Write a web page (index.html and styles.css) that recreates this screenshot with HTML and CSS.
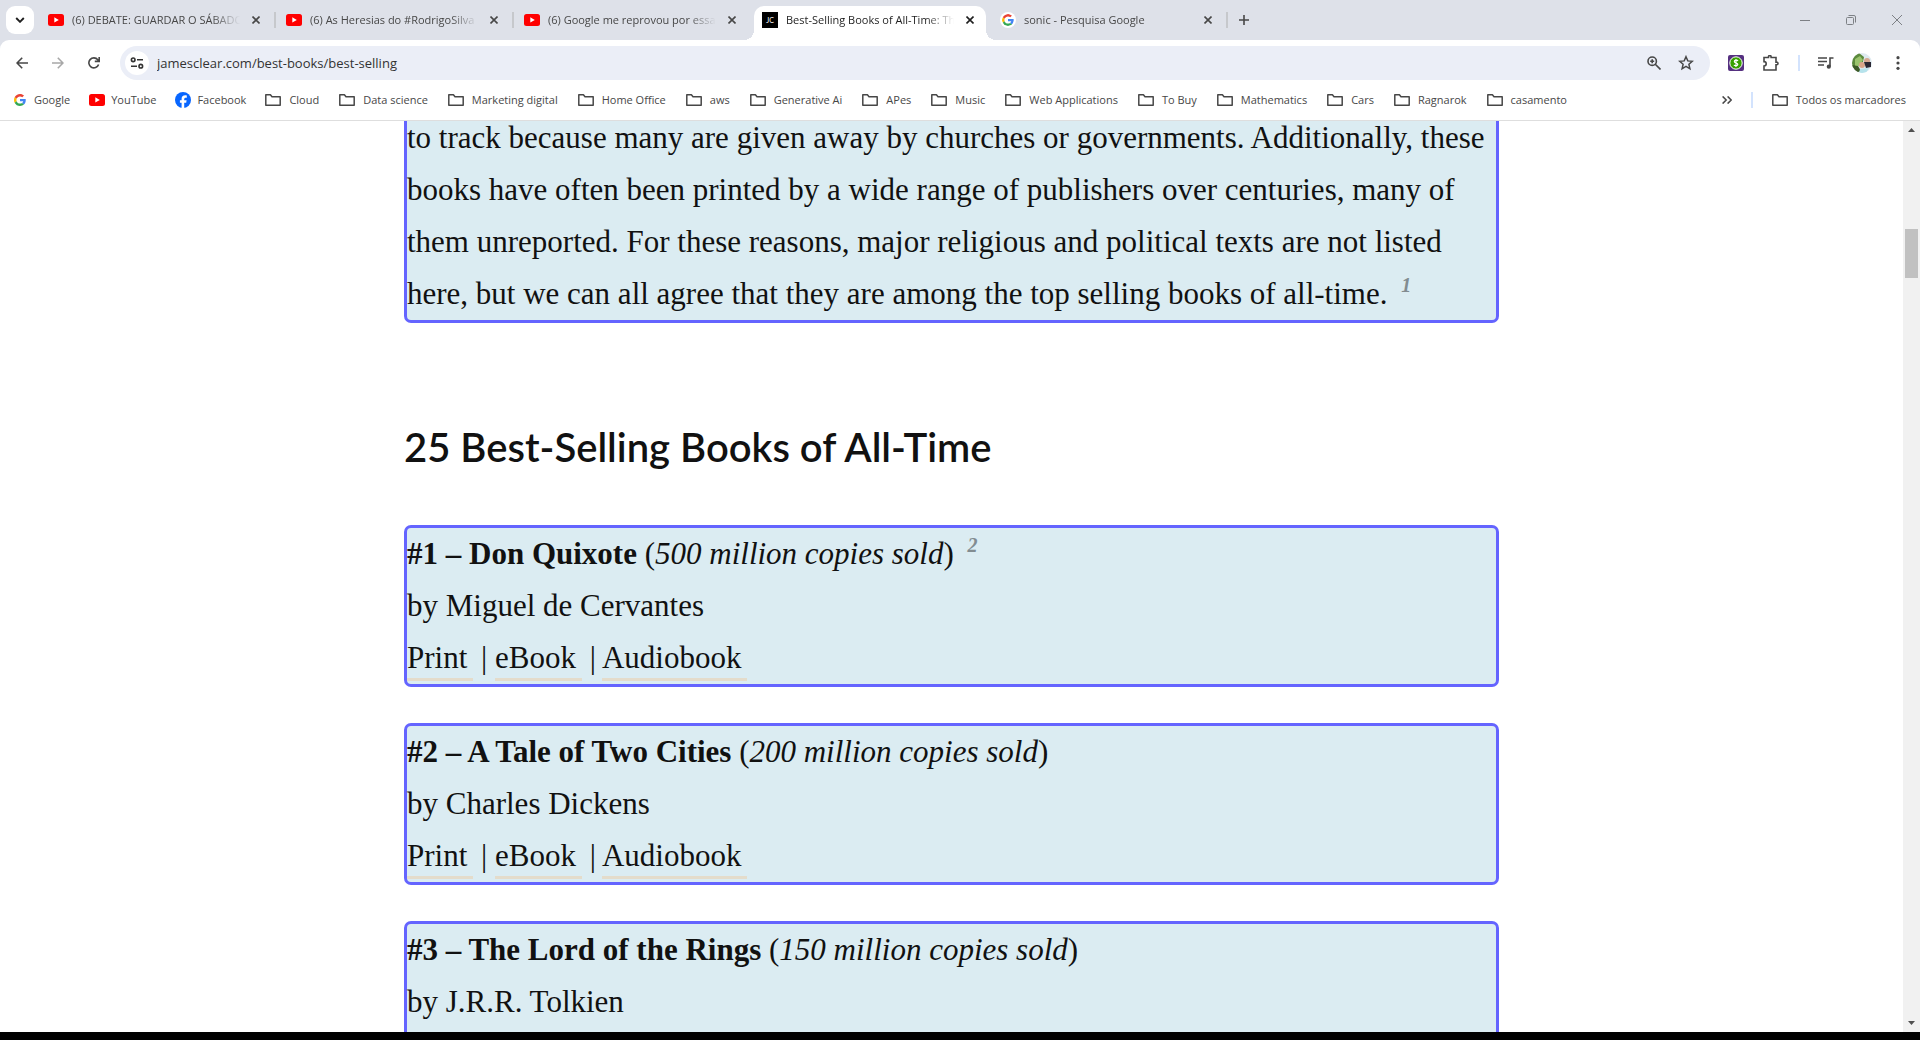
FILE: index.html
```html
<!DOCTYPE html>
<html lang="pt-BR">
<head>
<meta charset="utf-8">
<title>Best-Selling Books of All-Time</title>
<link rel="stylesheet" href="styles.css">
</head>
<body>
<svg class="defs" aria-hidden="true">
  <symbol id="yt" viewBox="0 0 16 16"><rect y="2" width="16" height="12" rx="2.5" fill="#f00"/><path d="M6.3 5.3v5.2L10.8 8z" fill="#fff"/></symbol>
  <symbol id="google" viewBox="0 0 48 48"><path fill="#ea4335" d="M24 9.5c3.54 0 6.71 1.22 9.21 3.6l6.85-6.85C35.9 2.38 30.47 0 24 0 14.62 0 6.51 5.38 2.56 13.22l7.98 6.19C12.43 13.72 17.74 9.5 24 9.5z"/><path fill="#4285f4" d="M46.98 24.55c0-1.57-.15-3.09-.38-4.55H24v9.02h12.94c-.58 2.96-2.26 5.48-4.78 7.18l7.73 6c4.51-4.18 7.09-10.36 7.09-17.65z"/><path fill="#fbbc05" d="M10.53 28.59c-.48-1.45-.76-2.99-.76-4.59s.27-3.14.76-4.59l-7.98-6.19C.92 16.46 0 20.12 0 24c0 3.88.92 7.54 2.56 10.78l7.97-6.19z"/><path fill="#34a853" d="M24 48c6.48 0 11.93-2.13 15.89-5.81l-7.73-6c-2.15 1.45-4.92 2.3-8.16 2.3-6.26 0-11.57-4.22-13.47-9.91l-7.98 6.19C6.51 42.62 14.62 48 24 48z"/></symbol>
  <symbol id="fb" viewBox="0 0 16 16"><circle cx="8" cy="8" r="8" fill="#0866ff"/><path fill="#fff" d="M6.6 15.9v-5.2H4.9V8.2h1.7V7.1c0-2.6 1.2-3.8 3.7-3.8.5 0 1.2.1 1.5.2v2.2h-1c-1.2 0-1.6.5-1.6 1.6v.9h2.4l-.4 2.5h-2v5.3z"/></symbol>
  <symbol id="folder" viewBox="0 0 16 16"><path d="M.8 13.200V2.8h4.600l1.600 2h8.200v8.400H.8z" fill="none" stroke="#474747" stroke-width="1.5" stroke-linejoin="round"/></symbol>
  <symbol id="x" viewBox="0 0 8 8"><path d="M.5.5l7 7m0-7l-7 7" fill="none" stroke="currentColor" stroke-width="1.6"/></symbol>
</svg>

<header class="browser">
  <div class="tabstrip">
    <button class="tabsearch" aria-label="Pesquisar guias"><svg width="10" height="6" viewBox="0 0 10 6"><path d="M1.2 1L5 4.8 8.8 1" fill="none" stroke="#1f1f1f" stroke-width="1.9"/></svg></button>
    <div class="tabs">
      <div class="tab"><svg class="fav"><use href="#yt"/></svg><span class="title">(6) DEBATE: GUARDAR O SÁBADO</span><button class="close" aria-label="Fechar"><svg><use href="#x"/></svg></button></div>
      <div class="tab"><svg class="fav"><use href="#yt"/></svg><span class="title">(6) As Heresias do #RodrigoSilva</span><button class="close" aria-label="Fechar"><svg><use href="#x"/></svg></button></div>
      <div class="tab plain"><svg class="fav"><use href="#yt"/></svg><span class="title">(6) Google me reprovou por essa</span><button class="close" aria-label="Fechar"><svg><use href="#x"/></svg></button></div>
      <div class="tab plain active"><span class="fav jc">JC</span><span class="title">Best-Selling Books of All-Time: The</span><button class="close" aria-label="Fechar"><svg><use href="#x"/></svg></button></div>
      <div class="tab"><svg class="fav round"><use href="#google"/></svg><span class="title">sonic - Pesquisa Google</span><button class="close" aria-label="Fechar"><svg><use href="#x"/></svg></button></div>
    </div>
    <button class="newtab" aria-label="Nova guia"><svg width="10" height="10" viewBox="0 0 10 10"><path d="M5 0v10M0 5h10" stroke="#474747" stroke-width="1.6"/></svg></button>
    <div class="window">
      <button aria-label="Minimizar"><svg width="10" height="10" viewBox="0 0 10 10"><path d="M0 5.5h10"/></svg></button>
      <button aria-label="Restaurar"><svg width="10" height="10" viewBox="0 0 10 10"><rect x=".5" y="2.5" width="7" height="7" rx="1"/><path d="M2.5.5h5.500a1.500 1.500 0 0 1 1.500 1.500v5.500"/></svg></button>
      <button aria-label="Fechar janela"><svg width="10" height="10" viewBox="0 0 10 10"><path d="M0 0l10 10M10 0L0 10"/></svg></button>
    </div>
  </div>

  <div class="toolbar">
    <button class="nav" aria-label="Voltar"><svg width="12" height="12" viewBox="0 0 12 12"><path d="M12 6H1.200M6.200.7L1 6l5.200 5.300" fill="none" stroke="#474747" stroke-width="1.6"/></svg></button>
    <button class="nav" aria-label="Avançar"><svg width="12" height="12" viewBox="0 0 12 12"><path d="M0 6h10.800M5.800.7L11 6l-5.200 5.300" fill="none" stroke="#a8a8a8" stroke-width="1.6"/></svg></button>
    <button class="nav" aria-label="Recarregar"><svg width="12" height="12" viewBox="0 0 12 12"><path d="M10.600 7.500A5 5 0 1 1 9.800 2.800L11 4M11.200 0v4.400H6.800" fill="none" stroke="#474747" stroke-width="1.6"/></svg></button>
    <div class="omnibox">
      <button class="site" aria-label="Informações do site"><svg width="14" height="12" viewBox="0 0 14 12" fill="none" stroke="#333" stroke-width="1.600"><circle cx="3.200" cy="2.800" r="1.800"/><path d="M7 2.800h6M1 9.200h6"/><circle cx="10.800" cy="9.200" r="1.800"/></svg></button>
      <input class="url" type="text" aria-label="Endereço" value="jamesclear.com/best-books/best-selling">
      <button class="ic" aria-label="Zoom"><svg width="14" height="14" viewBox="0 0 14 14" fill="none" stroke="#474747" stroke-width="1.6"><circle cx="5.200" cy="5.200" r="4.200"/><path d="M8.300 8.300l5.200 5.200M5.200 3.200v4M3.200 5.200h4"/></svg></button>
      <button class="ic" aria-label="Favoritar"><svg width="16" height="16" viewBox="0 0 16 16"><path d="M8 1.700l1.800 4.200 4.500.4-3.400 3 1 4.500L8 11.400l-3.900 2.400 1-4.500-3.400-3 4.500-.4z" fill="none" stroke="#474747" stroke-width="1.500"/></svg></button>
    </div>
    <div class="actions">
      <button aria-label="Extensão"><svg width="16" height="16" viewBox="0 0 16 16"><rect width="16" height="16" rx="2" fill="#553080"/><circle cx="8" cy="8" r="6.200" fill="#37a000" stroke="#fff"/><path d="M9.900 6C9.600 5 6.300 4.700 6.300 6.500c0 1.800 3.500 1.100 3.500 2.900C9.800 11.100 6.400 11 6 9.900M8 4v8" fill="none" stroke="#fff" stroke-width="1.200"/></svg></button>
      <button aria-label="Extensões"><svg width="18" height="16" viewBox="0 0 18 16"><path d="M2 2.500h4.500V1.800a1.300 1.300 0 0 1 2.600 0v.7H14v4.600h.7a1.300 1.300 0 0 1 0 2.600H14V15H2v-4a2.200 2.200 0 0 0 0-4.400z" fill="none" stroke="#474747" stroke-width="1.600"/></svg></button>
      <span class="rule"></span>
      <button aria-label="Controle de mídia"><svg width="16" height="12" viewBox="0 0 16 12"><path d="M0 1h9M0 4.500h9M0 8h6M12 9.500V1h3.500" fill="none" stroke="#474747" stroke-width="1.600"/><circle cx="10.800" cy="9.700" r="2.100" fill="#474747"/></svg></button>
      <button aria-label="Perfil"><svg width="20" height="20" viewBox="0 0 20 20"><defs><clipPath id="av"><circle cx="10" cy="10" r="10"/></clipPath></defs><g clip-path="url(#av)"><path fill="#dfeaf0" d="M0 0h20v20H0z"/><path fill="#5c8a3c" d="M0 3l7-3 5 4-1 5-11 6z"/><path fill="#9bc46d" d="M3 6l5-3 3 4-4 6-4 1z"/><path fill="#3c5a26" d="M0 12l6 1 3 5-6 2z"/><circle cx="10" cy="12" r="3" fill="#d8a488"/><circle cx="15" cy="8" r="3" fill="#d6a890"/><path fill="#2a2733" d="M12 9l7 0v5l-5 1z"/><path fill="#b6e3ec" d="M8 16l9-1-3 5H7z"/></g></svg></button>
      <button class="menu" aria-label="Menu"><svg width="4" height="14" viewBox="0 0 4 14" fill="#474747"><circle cx="2" cy="1.700" r="1.600"/><circle cx="2" cy="7" r="1.600"/><circle cx="2" cy="12.300" r="1.600"/></svg></button>
    </div>
  </div>

  <nav class="bookmarks">
    <a href="#"><svg class="g"><use href="#google"/></svg>Google</a>
    <a href="#"><svg><use href="#yt"/></svg>YouTube</a>
    <a href="#"><svg><use href="#fb"/></svg>Facebook</a>
    <a class="folder" href="#"><svg><use href="#folder"/></svg>Cloud</a>
    <a class="folder" href="#"><svg><use href="#folder"/></svg>Data science</a>
    <a class="folder" href="#"><svg><use href="#folder"/></svg>Marketing digital</a>
    <a class="folder" href="#"><svg><use href="#folder"/></svg>Home Office</a>
    <a class="folder" href="#"><svg><use href="#folder"/></svg>aws</a>
    <a class="folder" href="#"><svg><use href="#folder"/></svg>Generative Ai</a>
    <a class="folder" href="#"><svg><use href="#folder"/></svg>APes</a>
    <a class="folder" href="#"><svg><use href="#folder"/></svg>Music</a>
    <a class="folder" href="#"><svg><use href="#folder"/></svg>Web Applications</a>
    <a class="folder" href="#"><svg><use href="#folder"/></svg>To Buy</a>
    <a class="folder" href="#"><svg><use href="#folder"/></svg>Mathematics</a>
    <a class="folder" href="#"><svg><use href="#folder"/></svg>Cars</a>
    <a class="folder" href="#"><svg><use href="#folder"/></svg>Ragnarok</a>
    <a class="folder" href="#"><svg><use href="#folder"/></svg>casamento</a>
    <button class="more" aria-label="Mais favoritos"><svg width="10" height="8" viewBox="0 0 10 8"><path d="M.6.4L4.200 4 .6 7.600M5.600.4L9.200 4 5.600 7.600" fill="none" stroke="#474747" stroke-width="1.500"/></svg></button>
    <span class="rule"></span>
    <a class="folder" href="#"><svg><use href="#folder"/></svg>Todos os marcadores</a>
  </nav>
</header>

<div class="viewport">
  <main class="page">
    <article class="article">
      <p class="block">to track because many are given away by churches or governments. Additionally, these<br>books have often been printed by a wide range of publishers over centuries, many of<br>them unreported. For these reasons, major religious and political texts are not listed<br>here, but we can all agree that they are among the top selling books of all-time. <a class="note" href="#n1">1</a></p>
      <h2>25 Best-Selling Books of All-Time</h2>
      <p class="block"><strong>#1 – Don Quixote</strong> (<em>500 million copies sold</em>) <a class="note" href="#n2">2</a><br>by Miguel de Cervantes<br><a class="buy" href="#">Print</a> | <a class="buy" href="#">eBook</a> | <a class="buy" href="#">Audiobook</a></p>
      <p class="block"><strong>#2 – A Tale of Two Cities</strong> (<em>200 million copies sold</em>)<br>by Charles Dickens<br><a class="buy" href="#">Print</a> | <a class="buy" href="#">eBook</a> | <a class="buy" href="#">Audiobook</a></p>
      <p class="block"><strong>#3 – The Lord of the Rings</strong> (<em>150 million copies sold</em>)<br>by J.R.R. Tolkien<br><a class="buy" href="#">Print</a> | <a class="buy" href="#">eBook</a> | <a class="buy" href="#">Audiobook</a></p>
    </article>
  </main>
  <div class="scrollbar" aria-hidden="true">
    <svg width="7" height="4" viewBox="0 0 7 4"><path d="M0 4L3.500 0 7 4z"/></svg>
    <span class="before"></span><span class="thumb"></span><span class="after"></span>
    <svg width="7" height="4" viewBox="0 0 7 4"><path d="M0 0h7L3.500 4z"/></svg>
  </div>
</div>
</body>
</html>
```
FILE: styles.css
```css
* { box-sizing: border-box; }

body {
  margin: 0;
  height: 100vh;
  display: flex;
  flex-direction: column;
  padding-bottom: 8px;
  overflow: hidden;
  background: #000;
  font: 12px/16px "Open Sans", sans-serif;
  color: #474747;
}

.defs { position: absolute; width: 0; height: 0; }

button {
  border: 0;
  padding: 0;
  background: none;
  color: inherit;
  display: flex;
  align-items: center;
  justify-content: center;
}

a { color: inherit; text-decoration: none; }

/* Browser frame */
.browser { background: #dee1e9; border-bottom: 1px solid #dedede; }

.tabstrip { display: flex; height: 40px; padding-left: 6px; }

.tabsearch {
  width: 28px;
  height: 28px;
  margin-top: 6px;
  border-radius: 9px;
  background: #fff;
}

.tabs { display: flex; gap: 6px; margin-left: 6px; padding-top: 6px; }

.tab {
  position: relative;
  display: flex;
  align-items: center;
  width: 232px;
  height: 34px;
  padding: 0 8px 6px;
  border-radius: 10px 10px 0 0;
}

.tab::after {
  content: "";
  position: absolute;
  right: -4px;
  top: 6px;
  width: 2px;
  height: 16px;
  background: #c6c8cc;
}

.plain::after { display: none; }

.active { background: #fff; color: #1f1f1f; }

/* flared feet of the selected tab */
.active::before {
  content: "";
  position: absolute;
  left: -10px;
  right: -10px;
  bottom: 0;
  height: 10px;
  background:
    radial-gradient(circle at 0 0, transparent 10px, #fff 10px) 0 0 / 10px 10px no-repeat,
    radial-gradient(circle at 100% 0, transparent 10px, #fff 10px) 100% 0 / 10px 10px no-repeat;
}

.fav { width: 16px; height: 16px; flex: none; }
.round { border-radius: 8px; background: #fff; padding: 2px; }
.jc { background: #000; color: #fff; font: 400 7px/16px Lato, sans-serif; text-align: center; }

.title {
  flex: 1;
  margin: 0 8px;
  overflow: hidden;
  white-space: nowrap;
  font-size: 11px;
  mask-image: linear-gradient(to right, #000 calc(100% - 28px), transparent);
}

.close { width: 16px; height: 16px; }
.close svg { width: 8px; height: 8px; }

.newtab { width: 28px; height: 28px; margin: 6px 0 0 6px; }

.window { display: flex; margin-left: auto; }
.window button { width: 46px; height: 40px; }
.window svg { fill: none; stroke: #7d8085; }

.toolbar {
  display: flex;
  align-items: center;
  height: 46px;
  padding: 0 20px 0 4px;
  background: #fff;
  border-radius: 9px 9px 0 0;
}

.nav { width: 36px; height: 34px; }

.omnibox {
  flex: 1;
  display: flex;
  align-items: center;
  height: 34px;
  margin-left: 8px;
  padding: 0 8px 0 5px;
  border-radius: 17px;
  background: #ebeef7;
}

.site { width: 24px; height: 24px; border-radius: 12px; background: #fff; }

.url {
  flex: 1;
  border: 0;
  padding: 0 8px;
  outline: 0;
  background: none;
  font: 13px/20px "Open Sans", sans-serif;
  color: #333;
}

.ic { width: 32px; height: 32px; }

.actions { display: flex; align-items: center; gap: 18px; margin-left: 18px; }
.menu { margin-left: 6px; }

.rule { width: 2px; height: 16px; background: #d3e3fd; }

.bookmarks {
  display: flex;
  align-items: center;
  gap: 19px;
  height: 34px;
  padding: 0 13px 6px 12px;
  background: #fff;
  font-size: 11px;
  white-space: nowrap;
}

.bookmarks a { display: flex; align-items: center; gap: 6px; }
.bookmarks .folder { gap: 8px; padding-right: 1px; }
.bookmarks a svg { width: 16px; height: 16px; }
.bookmarks a .g { padding: 2px; }
.more { margin-left: auto; }

/* Web page */
.viewport { flex: 1; min-height: 0; display: flex; background: #fff; }

.page { flex: 1; overflow: hidden; padding: 0 24px; }

.article {
  max-width: 1095px;
  margin: -12px auto 0;
  font: 31px/52px "Liberation Serif", serif;
  color: #111;
}

.block {
  margin: 0 0 36px;
  border: 3px solid #6464ff;
  border-radius: 7px;
  background: #dbecf2;
  white-space: nowrap;
}

h2 {
  margin: 98px 0 52px;
  font: 600 40px/52px Lato, sans-serif;
}

.note {
  position: relative;
  top: -12px;
  margin-left: 6px;
  font-size: 20px;
  line-height: 20px;
  font-weight: 700;
  font-style: italic;
  color: #828c91;
}

.buy { padding: 0 6px 3px 0; border-bottom: 3px solid #e4dccb; }

.scrollbar {
  display: flex;
  flex-direction: column;
  align-items: center;
  width: 17px;
  padding: 7px 0;
  background: #f1f1f1;
  fill: #505050;
}

.before { flex: 97; }
.thumb { flex: 49; width: 13px; background: #c1c1c1; }
.after { flex: 743; }
```
